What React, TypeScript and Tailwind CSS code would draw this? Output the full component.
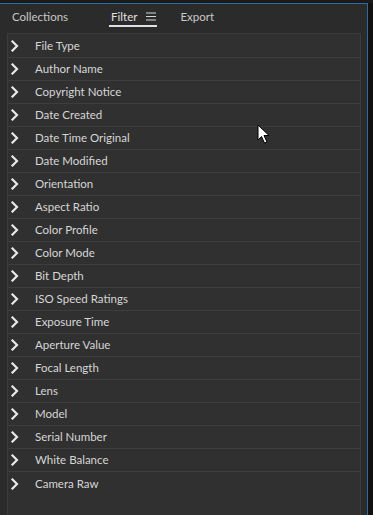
import React from "react";

const items = [
  "File Type",
  "Author Name",
  "Copyright Notice",
  "Date Created",
  "Date Time Original",
  "Date Modified",
  "Orientation",
  "Aspect Ratio",
  "Color Profile",
  "Color Mode",
  "Bit Depth",
  "ISO Speed Ratings",
  "Exposure Time",
  "Aperture Value",
  "Focal Length",
  "Lens",
  "Model",
  "Serial Number",
  "White Balance",
  "Camera Raw",
];

function Chevron() {
  return (
    <svg width="10" height="12" viewBox="0 0 10 12" className="shrink-0">
      <path d="M2.5 1.5 L7 6 L2.5 10.5" fill="none" stroke="#e8e8e8" strokeWidth="2.2" strokeLinecap="square" strokeLinejoin="miter" />
    </svg>
  );
}

export default function App() {
  return (
    <div
      className="w-[373px] h-[515px] bg-[#161616] flex flex-col relative overflow-hidden"
      style={{ fontFamily: "Lato, 'Open Sans', sans-serif" }}
    >
      <div className="h-[3px] bg-[#1b1b1b] shrink-0" />
      <div className="flex flex-1 min-h-0">
        <div className="w-[368px] flex flex-col bg-[#2b2b2b] border-t border-r border-[#2f6a9c]">
          <div className="h-[29px] flex items-start pt-[4px] text-[11.5px] text-[#c8c8c8] shrink-0 relative">
            <span className="ml-[12px]">Collections</span>
            <span className="ml-[43px] flex items-center text-[#e0e0e0] relative">
              <span>Filter</span>
              <svg width="10" height="9" viewBox="0 0 10 9" className="ml-[9px]">
                <path d="M0 1 H10 M0 4.5 H10 M0 8 H10" stroke="#d8d8d8" strokeWidth="1.2" />
              </svg>
              <span className="absolute left-[-2px] right-[-1px] top-[17px] h-[2px] bg-[#e0e0e0]" />
            </span>
            <span className="ml-[24px]">Export</span>
          </div>
          <div className="flex-1 ml-[7px] mr-[6px] pt-[1px] border-t border-l border-r border-[#3b3b3b] bg-[#303030] flex flex-col">
            {items.map((label, i) => (
              <div
                key={label}
                className={
                  "h-[23px] flex items-center pl-[2px] text-[11.5px] text-[#d6d6d6] " +
                  (i < items.length - 1 ? "border-b border-[#3d3d3d]" : "")
                }
              >
                <Chevron />
                <span className="ml-[15px]">{label}</span>
              </div>
            ))}
          </div>
        </div>
        <div className="flex-1 bg-[#111111]" />
      </div>
      <svg
        width="14"
        height="20"
        viewBox="0 0 14 20"
        className="absolute left-[257px] top-[124px]"
      >
        <path d="M1 1 L1 16 L4.5 12.5 L7.5 19 L10 18 L7 11.5 L12 11.5 Z" fill="#ffffff" stroke="#000000" strokeWidth="1" strokeLinejoin="round" />
      </svg>
    </div>
  );
}
